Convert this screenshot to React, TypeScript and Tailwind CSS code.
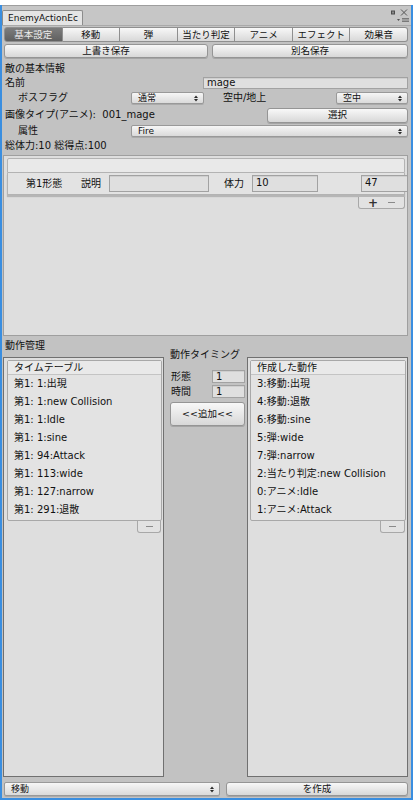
import React from "react";

const FONT = "font-['DejaVu_Sans','Noto_Sans_CJK_JP',sans-serif]";

function Arrows() {
  return (
    <svg width="4" height="7" viewBox="0 0 4 7" className="shrink-0">
      <path d="M0 3 L2 0.5 L4 3Z M0 4 L2 6.5 L4 4Z" fill="#2a2a2a" />
    </svg>
  );
}

function Popup({ label, className = "" }: { label: string; className?: string }) {
  return (
    <div
      className={`h-[12px] flex items-center justify-between pl-[6px] pr-[5px] rounded-[2px] border border-[#999999] bg-gradient-to-b from-[#f6f6f6] to-[#dadada] text-[9px] leading-none text-[#111] shadow-[0_1px_0_rgba(0,0,0,0.12)] ${className}`}
    >
      <span>{label}</span>
      <Arrows />
    </div>
  );
}

function Btn({ label, className = "" }: { label: string; className?: string }) {
  return (
    <div
      className={`flex items-center justify-center border border-[#959595] rounded-[3px] bg-gradient-to-b from-[#f8f8f8] to-[#d8d8d8] text-[9.5px] leading-none text-[#111] shadow-[0_1px_0_rgba(0,0,0,0.15)] ${className}`}
    >
      {label}
    </div>
  );
}

function Field({ value, className = "" }: { value: string; className?: string }) {
  return (
    <div
      className={`flex items-center px-[3px] border border-[#a2a2a2] bg-[#dfdfdf] shadow-[inset_0_1px_0_rgba(0,0,0,0.07)] text-[10px] leading-none text-[#111] ${className}`}
    >
      {value}
    </div>
  );
}

const tabs = ["基本設定", "移動", "弾", "当たり判定", "アニメ", "エフェクト", "効果音"];

const timeline = [
  "第1: 1:出現",
  "第1: 1:new Collision",
  "第1: 1:Idle",
  "第1: 1:sine",
  "第1: 94:Attack",
  "第1: 113:wide",
  "第1: 127:narrow",
  "第1: 291:退散",
];

const created = [
  "3:移動:出現",
  "4:移動:退散",
  "6:移動:sine",
  "5:弾:wide",
  "7:弾:narrow",
  "2:当たり判定:new Collision",
  "0:アニメ:Idle",
  "1:アニメ:Attack",
];

function ListBox({
  title,
  items,
  padL,
  padR,
  footerW,
}: {
  title: string;
  items: string[];
  padL: string;
  padR: string;
  footerW: string;
}) {
  return (
    <div className={`w-[161px] h-[420px] mt-[8px] border border-[#707070] bg-[#dedede] pt-[2px] ${padL} ${padR} flex flex-col`}>
      <div className="border border-[#a8a8a8] rounded-[2px] bg-[#e3e3e3] h-[161px] flex flex-col">
        <div className="h-[14px] bg-[#e9e9e9] border-b border-[#c4c4c4] flex items-center pl-[6px] text-[10px] leading-none">
          {title}
        </div>
        {items.map((t) => (
          <div key={t} className="h-[18px] flex items-center pl-[6px] text-[10px] leading-none whitespace-nowrap">
            {t}
          </div>
        ))}
      </div>
      <div className="flex justify-end pr-[1px]">
        <div className={`${footerW} h-[12px] border border-t-0 border-[#a8a8a8] rounded-b-[3px] bg-[#e2e2e2] flex items-center justify-center`}>
          <div className="w-[7px] h-[1.5px] bg-[#8a8a8a]" />
        </div>
      </div>
    </div>
  );
}

export default function App() {
  return (
    <div className={`${FONT} w-[413px] h-[800px] bg-white flex flex-col text-[#111] overflow-hidden`}>
      <div className="h-[5px] bg-white shrink-0" />
      <div className="flex-1 flex flex-col border-l-2 border-r-2 border-b-2 border-l-[#3a8ee0] border-r-[#3a8ee0] border-b-[#3a8ee0] bg-[#c2c2c2] min-h-0">
        {/* tab strip */}
        <div className="h-[21px] shrink-0 flex bg-[#c6c6c6] border-t border-[#9e9e9e] border-b border-b-[#a9a9a9]">
          <div className="self-end w-[81px] h-[15px] border border-b-0 border-[#8c8c8c] rounded-t-[2px] bg-[#e4e4e4] flex items-center pl-[5px] text-[9px] leading-none whitespace-nowrap overflow-hidden">
            EnemyActionEc
          </div>
          <svg width="20" height="14" viewBox="0 0 20 14" className="ml-auto mt-[3px] mr-[1px]">
            <rect x="1" y="1.5" width="4" height="4" fill="#4c4c4c" />
            <rect x="2" y="2.5" width="2" height="2" fill="#8a8a8a" />
            <path d="M11 0.5 L17 6.5 M17 0.5 L11 6.5" stroke="#555" strokeWidth="1" />
            <path d="M7 10 L10 10 L8.5 12Z" fill="#555" />
            <path d="M12 9.5 H19 M12 11 H19 M12 12.5 H19" stroke="#666" strokeWidth="0.8" />
          </svg>
        </div>

        {/* toolbar */}
        <div className="ml-[2px] w-[404px] h-[15px] flex shrink-0 mt-[1px]">
          {tabs.map((t, i) => (
            <div
              key={t}
              className={`flex-1 flex items-center justify-center border-y border-r border-[#8f8f8f] text-[9.5px] leading-none ${
                i === 0
                  ? "border-l rounded-l-[3px] bg-gradient-to-b from-[#7d7d7d] to-[#606060] text-[#ececec]"
                  : "bg-gradient-to-b from-[#f8f8f8] to-[#d8d8d8]"
              } ${i === tabs.length - 1 ? "rounded-r-[3px]" : ""}`}
            >
              {t}
            </div>
          ))}
        </div>

        {/* save row */}
        <div className="ml-[2px] w-[404px] h-[14px] mt-[2px] flex gap-[4px] shrink-0">
          <Btn label="上書き保存" className="w-[204px] h-full" />
          <Btn label="別名保存" className="w-[196px] h-full" />
        </div>

        <div className="h-[14px] mt-[4px] pl-[3px] flex items-center text-[10px] leading-none shrink-0">敵の基本情報</div>

        <div className="h-[14px] pl-[3px] pr-[3px] flex items-center text-[10px] leading-none shrink-0">
          <span>名前</span>
          <Field value="mage" className="ml-auto w-[205px] h-[12px]" />
        </div>

        <div className="h-[14px] mt-[1px] pl-[16px] flex items-center text-[10px] leading-none shrink-0">
          <span className="w-[113px]">ボスフラグ</span>
          <Popup label="通常" className="w-[73px]" />
          <span className="ml-[19px] w-[113px]">空中/地上</span>
          <Popup label="空中" className="w-[72px]" />
        </div>

        <div className="h-[16px] mt-[2px] pl-[3px] pr-[3px] flex items-center text-[10px] leading-none shrink-0">
          <span>画像タイプ(アニメ):&nbsp; 001_mage</span>
          <Btn label="選択" className="ml-auto w-[141px] h-[15px]" />
        </div>

        <div className="h-[14px] mt-[1px] pl-[16px] pr-[3px] flex items-center text-[10px] leading-none shrink-0">
          <span className="w-[113px] shrink-0">属性</span>
          <Popup label="Fire" className="flex-1" />
        </div>

        <div className="h-[14px] mt-[1px] pl-[3px] flex items-center text-[10px] leading-none shrink-0">総体力:10 総得点:100</div>

        {/* panel */}
        <div className="ml-[1px] w-[405px] h-[181px] mt-[2px] border border-[#9f9f9f] bg-[#dedede] pt-[2px] pl-[3px] pr-[2px] overflow-hidden shrink-0">
          <div className="h-[15px] bg-[#e9e9e9] border border-[#b3b3b3] rounded-t-[2px]" />
          <div className="h-[22px] bg-[#e3e3e3] border-x border-b border-[#b3b3b3] shadow-[0_2px_1px_rgba(0,0,0,0.18)] flex items-center pl-[18px] text-[10px] leading-none whitespace-nowrap">
            <span className="w-[55px] shrink-0">第1形態</span>
            <span className="w-[28px] shrink-0">説明</span>
            <Field value="" className="w-[100px] h-[17px] shrink-0" />
            <span className="ml-[15px] w-[28px] shrink-0">体力</span>
            <Field value="10" className="w-[66px] h-[17px] shrink-0 items-start pt-[2px]" />
            <Field value="47" className="ml-[43px] w-[60px] h-[17px] shrink-0 items-start pt-[2px]" />
          </div>
          <div className="ml-[351px] mt-[2px] w-[47px] h-[12px] border border-t-0 border-[#a8a8a8] rounded-b-[3px] bg-[#e2e2e2] flex items-center justify-around px-[4px] text-[12px] leading-none text-[#333]">
            <span className="font-bold">+</span>
            <span className="w-[7px] h-[1.5px] bg-[#8a8a8a]" />
          </div>
        </div>

        <div className="h-[12px] mt-[4px] pl-[3px] flex items-center text-[10px] leading-none shrink-0">動作管理</div>

        {/* boxes */}
        <div className="ml-[1px] mt-[-3px] flex shrink-0">
          <ListBox title="タイムテーブル" items={timeline} padL="pl-[3px]" padR="pr-[1px]" footerW="w-[24px]" />
          <div className="ml-[3px] w-[78px] flex flex-col text-[10px] leading-none">
            <div className="h-[12px] pl-[3px] flex items-center whitespace-nowrap">動作タイミング</div>
            <div className="h-[13px] mt-[9px] pl-[4px] flex items-center">
              <span>形態</span>
              <Field value="1" className="ml-auto w-[33px] h-[13px]" />
            </div>
            <div className="h-[13px] mt-[2px] pl-[4px] flex items-center">
              <span>時間</span>
              <Field value="1" className="ml-auto w-[33px] h-[13px]" />
            </div>
            <Btn label="<<追加<<" className="ml-[3px] mt-[4px] w-[75px] h-[24px]" />
          </div>
          <div className="ml-[2px]">
            <ListBox title="作成した動作" items={created} padL="pl-[2px]" padR="pr-[1px]" footerW="w-[25px]" />
          </div>
        </div>

        {/* bottom row */}
        <div className="ml-[2px] mt-[5px] h-[14px] flex gap-[6px] shrink-0">
          <Popup label="移動" className="w-[216px] h-[14px]" />
          <Btn label="を作成" className="w-[182px] h-[14px]" />
        </div>
      </div>
    </div>
  );
}
